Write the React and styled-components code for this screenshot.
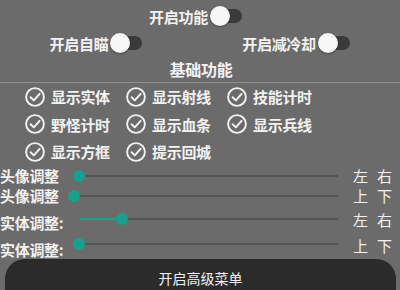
import React from 'react';
import styled, { createGlobalStyle } from 'styled-components';

const GlobalStyle = createGlobalStyle`
  html, body {
    margin: 0;
    padding: 0;
    background: #6b6b6b;
  }
  body {
    font-family: "Noto Sans CJK SC", "Noto Sans", sans-serif;
    color: #f2f2f2;
  }
`;

const Panel = styled.div`
  width: 400px;
  height: 290px;
  overflow: hidden;
  display: flex;
  flex-direction: column;
  padding-top: 4px;
  box-sizing: border-box;

  & > * {
    flex-shrink: 0;
  }
`;

const TopRow = styled.div`
  height: 24px;
  display: flex;
  justify-content: center;
  align-items: center;
  padding-right: 9px;
`;

const SwitchPair = styled.div`
  height: 30px;
  display: grid;
  grid-template-columns: 200px 200px;
  align-items: center;
  justify-items: center;
`;

const SwitchItem = styled.div`
  display: flex;
  align-items: center;
  gap: 2px;
  margin-left: ${(p) => p.$shift || 0}px;
`;

const Label = styled.span`
  font-size: ${(p) => p.$size || 15}px;
  font-weight: 700;
  line-height: 1;
  letter-spacing: -0.3px;
`;

const Toggle = styled.div`
  position: relative;
  width: 32px;
  height: 20px;
`;

const ToggleTrack = styled.div`
  position: absolute;
  left: 6px;
  right: 0;
  top: 3px;
  bottom: 3px;
  border-radius: 7px;
  background: #3a3a3a;
`;

const ToggleThumb = styled.div`
  position: absolute;
  left: 0;
  top: 0;
  width: 20px;
  height: 20px;
  border-radius: 50%;
  background: #f6f6f6;
  box-shadow: 0 1px 2px rgba(0, 0, 0, 0.35);
`;

const Heading = styled.div`
  height: 22px;
  display: flex;
  align-items: center;
  justify-content: center;
  padding-left: 2px;
`;

const Divider = styled.div`
  height: 1px;
  background: #8e8e8e;
  margin-top: 2px;
`;

const CheckGrid = styled.div`
  display: grid;
  grid-template-columns: repeat(3, 101px);
  grid-auto-rows: 27.5px;
  padding: 0 0 0 25px;
  align-items: center;
`;

const CheckItem = styled.div`
  display: flex;
  align-items: center;
  gap: 6px;
`;

const SliderList = styled.div`
  display: flex;
  flex-direction: column;
`;

const SliderRow = styled.div`
  height: ${(p) => p.$h}px;
  display: grid;
  grid-template-columns: 72px 268px 1fr;
  align-items: center;
`;

const SliderLabel = styled.span`
  font-size: 15px;
  font-weight: 700;
  line-height: 1;
  letter-spacing: -0.3px;
  margin-top: ${(p) => p.$drop || 0}px;
  white-space: nowrap;
`;

const Track = styled.div`
  position: relative;
  height: 2px;
  margin: 0 2px 0 7px;
  background: #555555;
`;

const Fill = styled.div`
  position: absolute;
  left: 0;
  top: 0;
  height: 2px;
  background: #17a08c;
`;

const Knob = styled.div`
  position: absolute;
  top: 50%;
  width: 12px;
  height: 12px;
  border-radius: 50%;
  background: #17a08c;
  transform: translate(-50%, -50%);
`;

const Ends = styled.div`
  display: flex;
  gap: 9px;
  padding-left: 13px;
  font-size: 15px;
  line-height: 1;
  margin-top: ${(p) => p.$drop || 0}px;
`;

const BigButton = styled.div`
  margin: 5px 4px 0 5px;
  height: 40px;
  border-radius: 20px 20px 0 0;
  background: #2b2b2b;
  display: flex;
  justify-content: center;
  padding-top: 9px;
  box-sizing: border-box;
  font-size: 14px;
`;

const CheckIcon = () => (
  <svg width="20" height="20" viewBox="0 0 20 20" fill="none">
    <circle cx="10" cy="10" r="8.9" stroke="#f2f2f2" strokeWidth="1.9" />
    <path d="M5.6 10.3 L8.8 13.4 L14.6 6.9" stroke="#f2f2f2" strokeWidth="2"
      strokeLinecap="round" strokeLinejoin="round" />
  </svg>
);

const Switch = () => (
  <Toggle>
    <ToggleTrack />
    <ToggleThumb />
  </Toggle>
);

const checks = [
  '显示实体', '显示射线', '技能计时',
  '野怪计时', '显示血条', '显示兵线',
  '显示方框', '提示回城',
];

const sliders = [
  { label: '头像调整', ends: ['左', '右'], at: 0, h: 20 },
  { label: '头像调整', ends: ['上', '下'], at: -5, h: 20 },
  { label: '实体调整:', ends: ['左', '右'], at: 43, h: 26, drop: 8, endDrop: 2 },
  { label: '实体调整:', ends: ['上', '下'], at: 0, h: 22, drop: 10, endDrop: 3 },
];

export default function App() {
  return (
    <>
      <GlobalStyle />
      <Panel>
        <TopRow>
          <SwitchItem>
            <Label>开启功能</Label>
            <Switch />
          </SwitchItem>
        </TopRow>
        <SwitchPair>
          <SwitchItem $shift={-8}>
            <Label>开启自瞄</Label>
            <Switch />
          </SwitchItem>
          <SwitchItem $shift={-8}>
            <Label>开启减冷却</Label>
            <Switch />
          </SwitchItem>
        </SwitchPair>
        <Heading>
          <Label $size={16}>基础功能</Label>
        </Heading>
        <Divider />
        <CheckGrid>
          {checks.map((c) => (
            <CheckItem key={c}>
              <CheckIcon />
              <Label>{c}</Label>
            </CheckItem>
          ))}
        </CheckGrid>
        <SliderList>
          {sliders.map((s, i) => (
            <SliderRow key={i} $h={s.h}>
              <SliderLabel $drop={s.drop}>{s.label}</SliderLabel>
              <Track>
                <Fill style={{ width: Math.max(s.at, 0) }} />
                <Knob style={{ left: s.at }} />
              </Track>
              <Ends $drop={s.endDrop}>
                <span>{s.ends[0]}</span>
                <span>{s.ends[1]}</span>
              </Ends>
            </SliderRow>
          ))}
        </SliderList>
        <BigButton>开启高级菜单</BigButton>
      </Panel>
    </>
  );
}
